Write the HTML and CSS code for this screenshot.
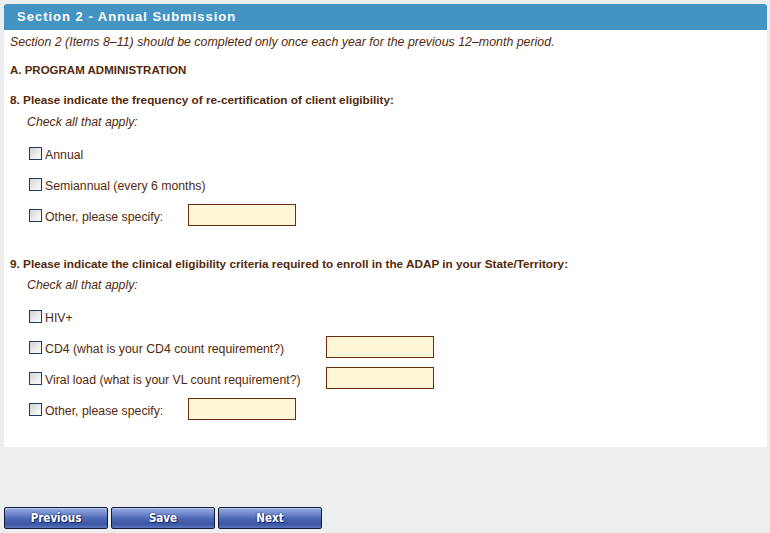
FILE: index.html
```html
<!DOCTYPE html>
<html lang="en">
<head>
<meta charset="utf-8">
<title>Section 2 - Annual Submission</title>
<link rel="stylesheet" href="styles.css">
</head>
<body>
<div class="panel">
  <div class="panel-head">Section 2 - Annual Submission</div>
  <div class="panel-body">
    <p class="intro">Section 2 (Items 8–11) should be completed only once each year for the previous 12–month period.</p>
    <p class="section-title">A. PROGRAM ADMINISTRATION</p>

    <p class="question q8">8. Please indicate the frequency of re-certification of client eligibility:</p>
    <p class="hint">Check all that apply:</p>
    <div class="options">
      <div class="opt"><input type="checkbox" class="cb"><span class="lbl">Annual</span></div>
      <div class="opt"><input type="checkbox" class="cb"><span class="lbl">Semiannual (every 6 months)</span></div>
      <div class="opt"><input type="checkbox" class="cb"><span class="lbl short">Other, please specify:</span><input type="text" class="txt"></div>
    </div>

    <p class="question q9">9. Please indicate the clinical eligibility criteria required to enroll in the ADAP in your State/Territory:</p>
    <p class="hint">Check all that apply:</p>
    <div class="options">
      <div class="opt"><input type="checkbox" class="cb"><span class="lbl">HIV+</span></div>
      <div class="opt"><input type="checkbox" class="cb"><span class="lbl long">CD4 (what is your CD4 count requirement?)</span><input type="text" class="txt"></div>
      <div class="opt"><input type="checkbox" class="cb"><span class="lbl long">Viral load (what is your VL count requirement?)</span><input type="text" class="txt"></div>
      <div class="opt"><input type="checkbox" class="cb"><span class="lbl short">Other, please specify:</span><input type="text" class="txt"></div>
    </div>
  </div>
</div>
<div class="nav">
  <button class="btn">Previous</button>
  <button class="btn">Save</button>
  <button class="btn">Next</button>
</div>
</body>
</html>
```
FILE: styles.css
```css
html, body {
  margin: 0;
  background: #edeef0;
}
body {
  padding: 4px 3px 0 4px;
  font-family: "Liberation Sans", Arial, sans-serif;
  font-size: 12.3px;
  color: #55290b;
}
.panel {
  background: #ffffff;
  border-radius: 3px 3px 0 0;
}
.panel-head {
  height: 26px;
  line-height: 26px;
  background: #4393c3;
  color: #ffffff;
  font-weight: bold;
  font-size: 13px;
  letter-spacing: 1px;
  padding-left: 13px;
  border-radius: 3px 3px 0 0;
}
.panel-body {
  padding: 4px 6px 27px 6px;
}
p {
  margin: 0;
  line-height: 16px;
}
.intro {
  font-style: italic;
  font-size: 12.4px;
}
.section-title {
  font-weight: bold;
  font-size: 11.5px;
  margin-top: 12px;
}
.question {
  font-weight: bold;
  font-size: 11.75px;
}
.q8 { margin-top: 14px; }
.q9 { margin-top: 30px; }
.hint {
  font-style: italic;
  margin-top: 6px;
  padding-left: 17px;
}
.q9 + .hint { margin-top: 5px; }
.options {
  margin-top: 12px;
  padding-left: 19px;
  display: flex;
  flex-direction: column;
  gap: 9px;
}
.opt {
  height: 22px;
  display: flex;
  align-items: center;
}
.cb {
  appearance: none;
  -webkit-appearance: none;
  width: 13px;
  height: 13px;
  margin: 0 3px 0 0;
  border: 1px solid #173f69;
  background: linear-gradient(135deg, #d2d2d2 0%, #ececec 55%, #fbfbfb 100%);
  box-sizing: border-box;
  flex: none;
}
.lbl {
  line-height: 16px;
  padding-top: 4px;
}
.short { width: 143px; }
.long { width: 281px; }
.txt {
  width: 108px;
  height: 22px;
  box-sizing: border-box;
  margin: 0;
  border: 1px solid #6b2d0a;
  background: #fff6d7;
  padding: 0 3px;
  font: inherit;
}
.nav {
  margin-top: 60px;
  display: flex;
  gap: 3px;
}
.btn {
  width: 104px;
  height: 22px;
  box-sizing: border-box;
  border: 1px solid #141a3a;
  border-radius: 2px;
  background: linear-gradient(to bottom, #9aaee0 0%, #6f88cc 30%, #4a66b4 55%, #3c56a4 80%, #5a74bc 100%);
  box-shadow: inset 0 1px 0 rgba(255,255,255,0.35);
  color: #ffffff;
  font-family: "DejaVu Sans", Verdana, sans-serif;
  font-stretch: condensed;
  font-weight: bold;
  font-size: 11.5px;
  text-shadow: 0 0 2px #1a2a6a, 1px 1px 0 #1a2a6a;
  padding: 0;
  cursor: pointer;
}
```
